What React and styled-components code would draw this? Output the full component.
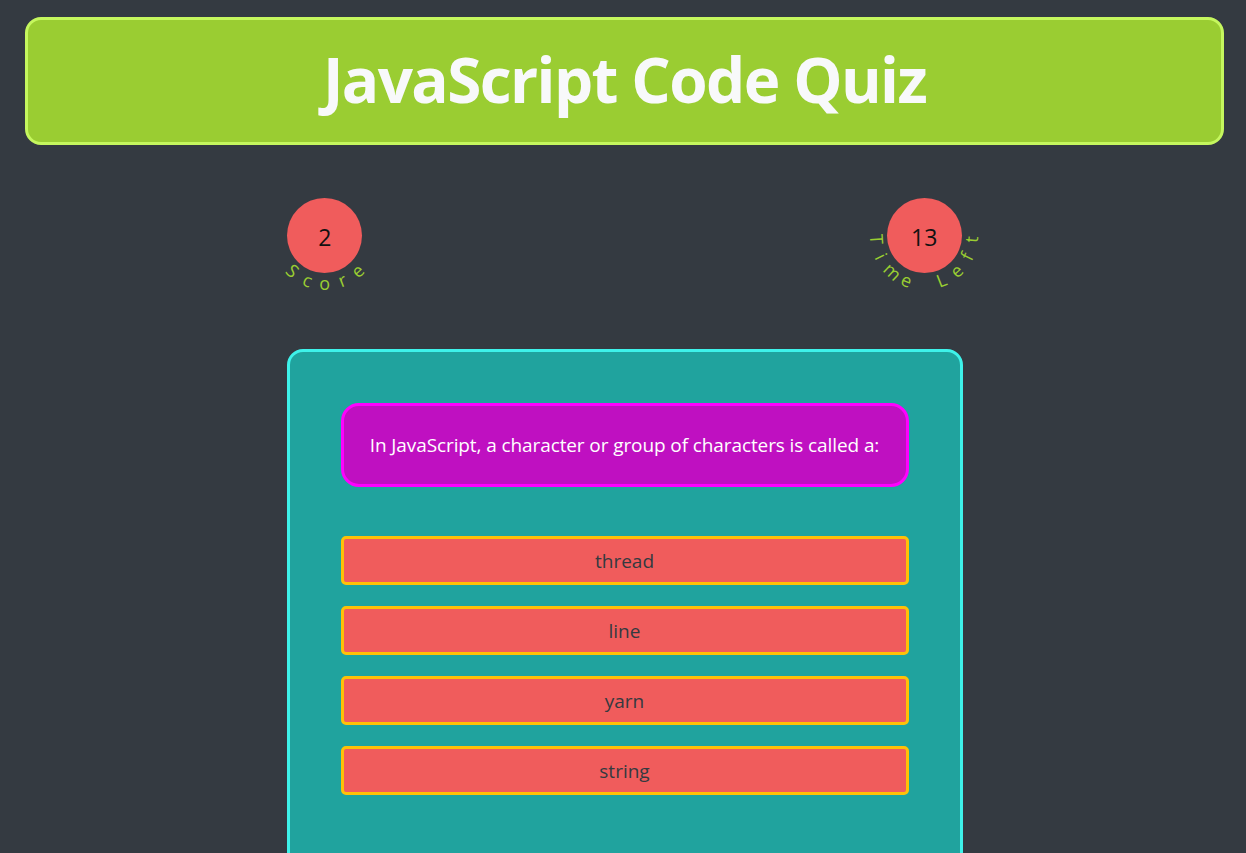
import React from 'react';
import styled, { createGlobalStyle } from 'styled-components';

const GlobalStyle = createGlobalStyle`
  html, body {
    margin: 0;
    padding: 0;
    background: #343a41;
  }
  body {
    font-family: 'Open Sans', 'Noto Sans', sans-serif;
  }
`;

const answers = ['thread', 'line', 'yarn', 'string'];

function CurvedLabel({ text, step = 21.5, radius = 47 }) {
  const chars = text.split('');
  const mid = (chars.length - 1) / 2;
  return (
    <>
      {chars.map((ch, i) => (
        <Letter
          key={i}
          style={{
            transform: `rotate(${(mid - i) * step}deg) translateY(${radius}px)`,
          }}
        >
          {ch === ' ' ? '\u00a0' : ch}
        </Letter>
      ))}
    </>
  );
}

function StatBubble({ value, label }) {
  return (
    <Bubble>
      <BubbleValue>{value}</BubbleValue>
      <CurvedLabel text={label} />
    </Bubble>
  );
}

function App() {
  return (
    <Page>
      <GlobalStyle />
      <Header>
        <Title>JavaScript Code Quiz</Title>
      </Header>
      <StatsRow>
        <StatBubble value="2" label="Score" />
        <StatBubble value="13" label="Time Left" />
      </StatsRow>
      <QuizCard>
        <Question>In JavaScript, a character or group of characters is called a:</Question>
        <AnswerList>
          {answers.map((a) => (
            <AnswerButton key={a}>{a}</AnswerButton>
          ))}
        </AnswerList>
      </QuizCard>
    </Page>
  );
}

const Page = styled.div`
  padding: 17px 22px 0 25px;
  min-height: 853px;
  box-sizing: border-box;
  overflow: hidden;
`;

const Header = styled.header`
  height: 128px;
  box-sizing: border-box;
  background: #9acd32;
  border: 3px solid #c5f75e;
  border-radius: 16px;
  display: flex;
  align-items: center;
  justify-content: center;
`;

const Title = styled.h1`
  margin: 0 0 4px;
  color: #f8f9fa;
  font-family: 'Open Sans', sans-serif;
  font-weight: 700;
  font-size: 62px;
  line-height: 1;
  letter-spacing: -1.6px;
`;

const StatsRow = styled.div`
  display: flex;
  justify-content: space-around;
  margin-top: 53px;
`;

const Bubble = styled.div`
  position: relative;
  width: 75px;
  height: 75px;
  border-radius: 50%;
  background: #f05c5c;
  display: flex;
  align-items: center;
  justify-content: center;
`;

const BubbleValue = styled.span`
  color: #111;
  font-size: 23px;
  margin-top: 3px;
`;

const Letter = styled.span`
  position: absolute;
  left: 50%;
  top: 50%;
  width: 14px;
  height: 20px;
  margin: -10px 0 0 -7px;
  text-align: center;
  line-height: 20px;
  font-size: 18px;
  color: #9acd32;
  transform-origin: 50% 50%;
`;

const QuizCard = styled.section`
  width: 676px;
  box-sizing: border-box;
  margin: 76px auto 0;
  min-height: 520px;
  background: #20a39e;
  border: 3px solid #3ef2ea;
  border-radius: 16px;
  padding: 51px 51px 50px;
`;

const Question = styled.div`
  height: 84px;
  box-sizing: border-box;
  background: #bf10c1;
  border: 3px solid #ff00ff;
  border-radius: 18px;
  display: flex;
  align-items: center;
  justify-content: center;
  color: #fff;
  font-size: 19px;
  letter-spacing: -0.1px;
`;

const AnswerList = styled.div`
  display: flex;
  flex-direction: column;
  gap: 21px;
  margin-top: 49px;
`;

const AnswerButton = styled.button`
  height: 49px;
  box-sizing: border-box;
  background: #f05c5c;
  border: 3px solid #ffc107;
  border-radius: 5px;
  color: #343a40;
  font-family: 'Open Sans', sans-serif;
  font-size: 19px;
  cursor: pointer;
`;

export default App;
